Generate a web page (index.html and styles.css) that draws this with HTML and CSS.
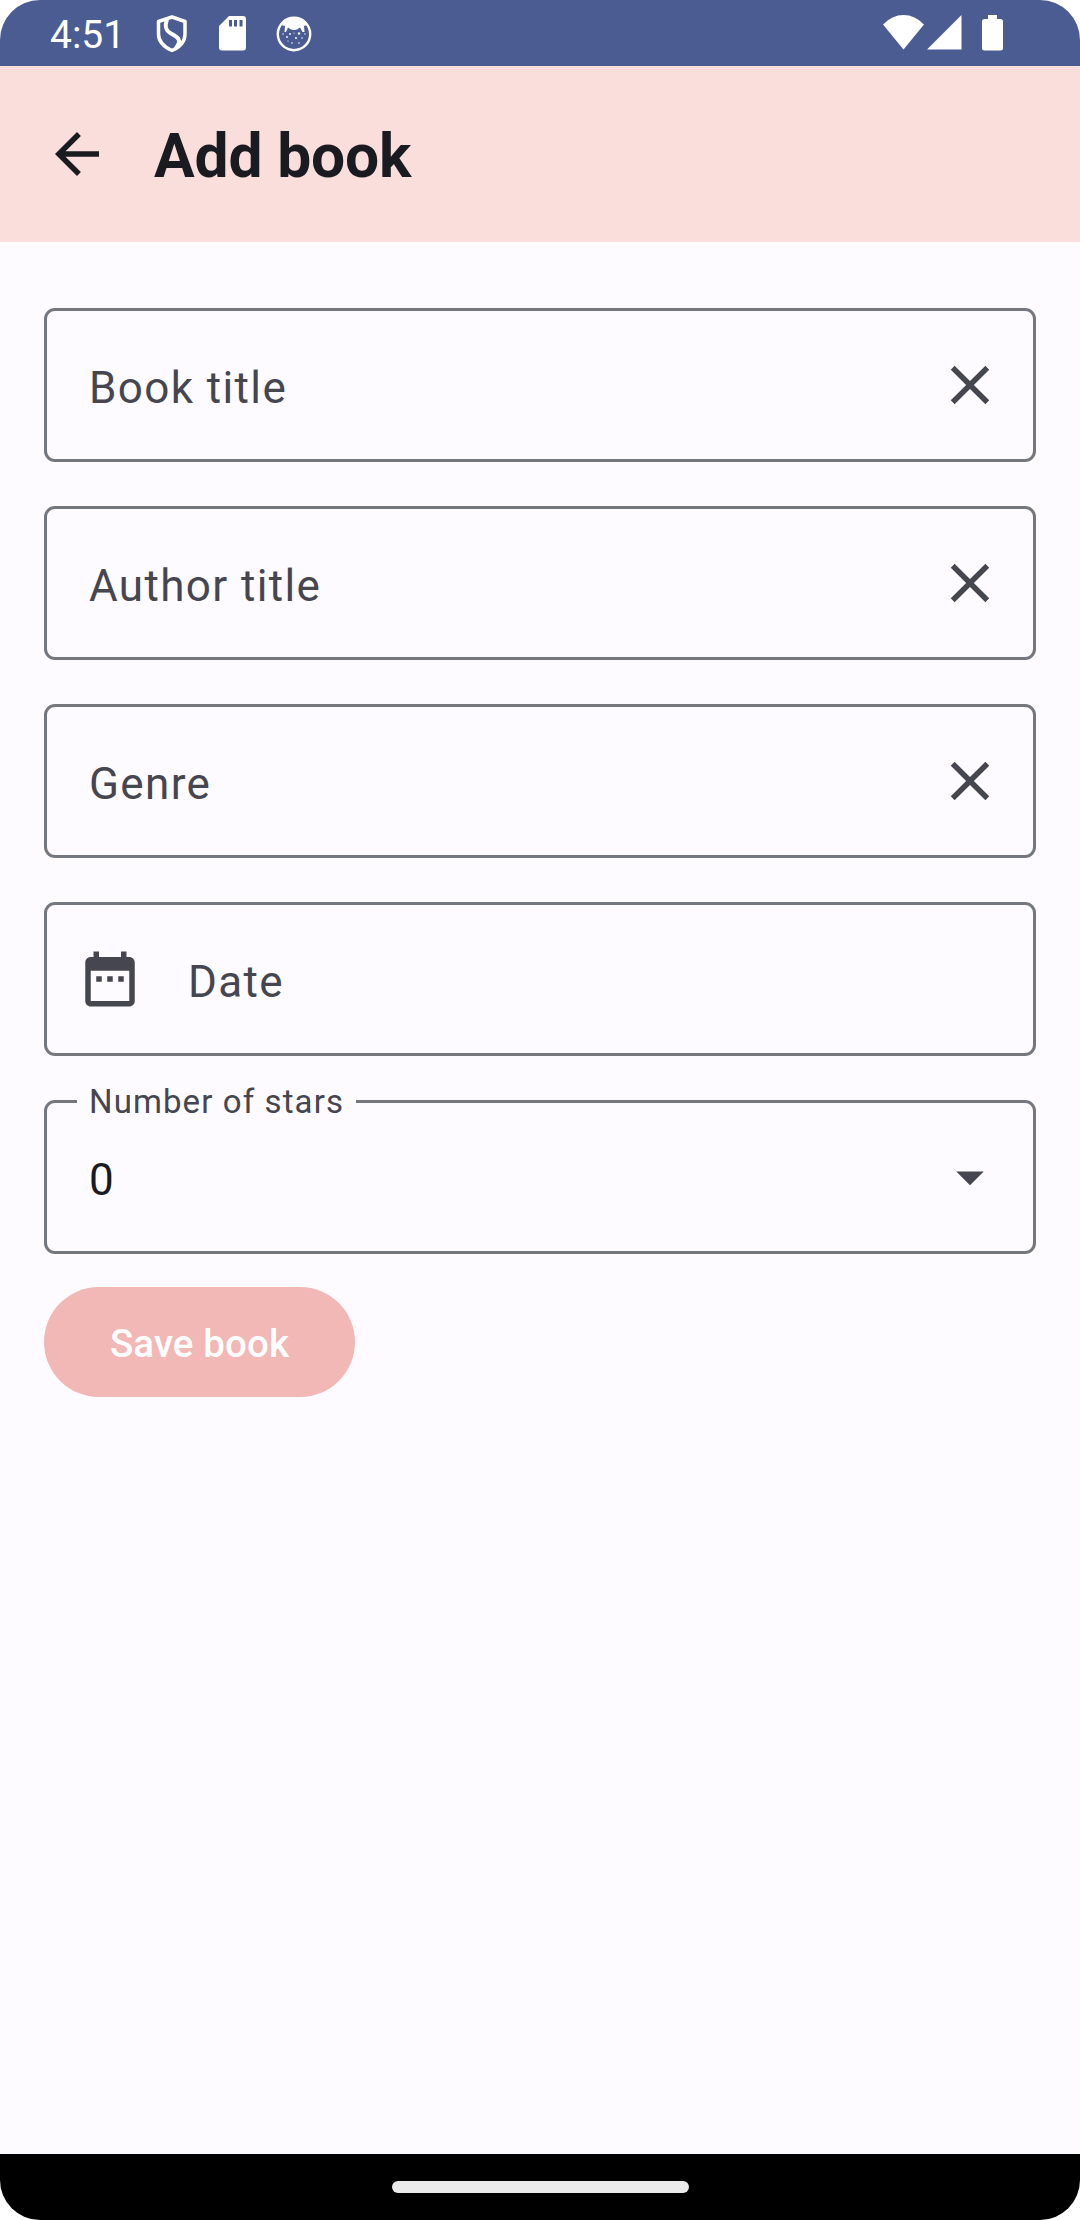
FILE: index.html
```html
<!DOCTYPE html>
<html lang="en">
<head>
<meta charset="utf-8">
<title>Add book</title>
<link rel="stylesheet" href="styles.css">
</head>
<body>
<div class="screen">
  <div class="status">
    <span class="time">4:51</span>
    <svg class="shield" width="32" height="38" viewBox="0 0 32 38" fill="none" stroke="#fff" stroke-width="3.5" stroke-linejoin="round"><path d="M16 2 29 6.500V19C29 27 24 32 16 35.500 8 32 2.500 27 2.500 19V6.500Z"/><path d="M11 4.500C8.500 11 9 15 15 18.500 22.500 22.500 26 25 20 33" stroke-width="4"/></svg>
    <svg class="sd" width="27" height="35" viewBox="0 0 27 35" fill="#fff"><path fill-rule="evenodd" d="M10 0H24Q27 0 27 3V31.500Q27 34.500 24 34.500H3Q0 34.500 0 31.500V10ZM10 4V10.500H13V4ZM15 4V10.500H18V4ZM20.500 4V10.500H23.500V4Z"/></svg>
    <svg class="cat" width="36" height="36" viewBox="0 0 36 36"><circle cx="18" cy="18" r="16.200" fill="none" stroke="#fff" stroke-width="2.400"/><path fill="#fff" d="M5 9Q10 1.500 18 1.500T31 9L28 10 28.500 16 26.500 16 24 11.500Q21 14 18 14T12 11.500L10 16 8.500 16 9 10Z"/><g fill="#fff"><circle cx="23" cy="17.500" r="1.200"/><circle cx="14" cy="18" r=".9"/><circle cx="20" cy="22" r="1"/><circle cx="11" cy="21" r=".9"/><circle cx="26" cy="22" r=".8"/><circle cx="16" cy="27" r=".8"/><circle cx="23" cy="27" r=".8"/><circle cx="7" cy="18" r=".7"/><circle cx="29" cy="18" r=".7"/><circle cx="12" cy="25" r=".6"/><circle cx="18" cy="17" r=".6"/></g></svg>
    <div class="system">
      <svg width="42" height="35" viewBox="0 0 42 35" fill="#fff"><path d="M0 9.500Q9 0 20.500 0T41 9.500L20.500 34.500Z"/></svg>
      <svg class="signal" width="35" height="35" viewBox="0 0 35 35" fill="#fff"><path d="M34.500 0V34.500H0Z"/></svg>
      <svg class="battery" width="21" height="36" viewBox="0 0 21 36" fill="#fff"><path d="M6 0H15V4H18.500Q21 4 21 6.500V33Q21 35.500 18.500 35.500H2.500Q0 35.500 0 33V6.500Q0 4 2.500 4H6Z"/></svg>
    </div>
  </div>
  <header class="appbar">
    <svg class="icon" viewBox="0 0 24 24"><path d="M20 11H7.830l5.590-5.590L12 4l-8 8 8 8 1.410-1.410L7.830 13H20v-2z"/></svg>
    <h1 class="title">Add book</h1>
  </header>
  <main class="form">
    <div class="field"><span class="text">Book title</span><svg class="icon" viewBox="0 0 24 24"><path d="M19 6.410 17.590 5 12 10.590 6.410 5 5 6.410 10.590 12 5 17.590 6.410 19 12 13.410 17.590 19 19 17.590 13.410 12z"/></svg></div>
    <div class="field"><span class="text">Author title</span><svg class="icon" viewBox="0 0 24 24"><path d="M19 6.410 17.590 5 12 10.590 6.410 5 5 6.410 10.590 12 5 17.590 6.410 19 12 13.410 17.590 19 19 17.590 13.410 12z"/></svg></div>
    <div class="field"><span class="text">Genre</span><svg class="icon" viewBox="0 0 24 24"><path d="M19 6.410 17.590 5 12 10.590 6.410 5 5 6.410 10.590 12 5 17.590 6.410 19 12 13.410 17.590 19 19 17.590 13.410 12z"/></svg></div>
    <div class="field date"><svg class="icon" viewBox="0 0 24 24"><path d="M9 11H7v2h2v-2zm4 0h-2v2h2v-2zm4 0h-2v2h2v-2zm2-7h-1V2h-2v2H8V2H6v2H5c-1.110 0-1.990.9-1.990 2L3 20c0 1.100.89 2 2 2h14c1.100 0 2-.9 2-2V6c0-1.100-.9-2-2-2zm0 16H5V9h14v11z"/></svg><span class="text">Date</span></div>
    <div class="field"><span class="label">Number of stars</span><span class="text value">0</span><svg class="icon" viewBox="0 0 24 24"><path d="M7 10l5 5 5-5z"/></svg></div>
    <button class="save">Save book</button>
  </main>
  <div class="navbar"><div class="handle"></div></div>
</div>
</body>
</html>
```

FILE: styles.css
```css
* { box-sizing: border-box; }
body { margin: 0; background: #fff; font-family: Roboto, sans-serif; }
svg { display: block; flex: none; }
.screen {
  display: flex;
  flex-direction: column;
  width: 1080px;
  height: 2220px;
  border-radius: 40px;
  overflow: hidden;
  background: #fdfbff;
}
.status {
  display: flex;
  align-items: flex-start;
  height: 66px;
  padding: 15px 77px 0 50px;
  background: #4b5c92;
  color: #fff;
}
.time { width: 106px; font-size: 39px; line-height: 40px; }
.sd { margin: 1px 0 0 31px; }
.cat { margin: 1px 0 0 30px; }
.system { display: flex; margin-left: auto; }
.signal { margin-left: 2px; }
.battery { margin-left: 20px; }
.appbar {
  display: flex;
  align-items: center;
  gap: 44px;
  height: 176px;
  padding: 0 44px;
  background: #fadedb;
}
.icon { width: 66px; height: 66px; fill: #45464f; }
.appbar .icon { fill: #1a1b21; }
.title { margin: 0; padding-top: 5px; font-size: 60.500px; line-height: 77px; font-weight: 700; letter-spacing: -.15px; color: #1a1b21; }
.form {
  display: flex;
  flex: 1;
  flex-direction: column;
  align-items: stretch;
  gap: 44px;
  padding: 66px 44px 0;
}
.field {
  position: relative;
  display: flex;
  align-items: center;
  justify-content: space-between;
  height: 154px;
  padding: 0 30px 0 42px;
  border: 3px solid #757780;
  border-radius: 11px;
}
.date { justify-content: flex-start; gap: 45px; padding-left: 30px; }
.text { padding-top: 6px; font-size: 44px; line-height: 66px; letter-spacing: 1.375px; color: #45464f; }
.value { color: #1a1b21; }
.label {
  position: absolute;
  left: 30px;
  top: -23px;
  width: 279px;
  padding-left: 12px;
  font-size: 33px;
  line-height: 44px;
  letter-spacing: 1.100px;
  white-space: nowrap;
  color: #45464f;
  background: #fdfbff;
}
.save {
  align-self: flex-start;
  width: 311px;
  height: 110px;
  margin-top: -11px;
  padding: 3px 0 0;
  border: 0;
  border-radius: 55px;
  background: #f2b8b5;
  color: #fff;
  font: 500 38.500px/55px Roboto, sans-serif;
  letter-spacing: .1px;
}
.navbar { display: flex; justify-content: center; height: 66px; padding-top: 27px; background: #000; }
.handle { width: 297px; height: 12px; border-radius: 6px; background: #ebebeb; }
```
